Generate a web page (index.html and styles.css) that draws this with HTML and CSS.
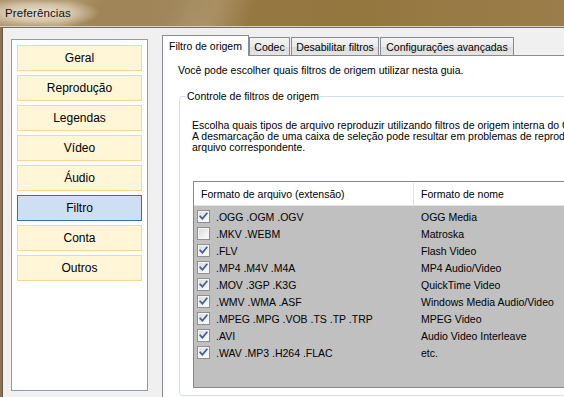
FILE: index.html
```html
<!DOCTYPE html>
<html lang="pt-BR">
<head>
<meta charset="utf-8">
<title>Preferências</title>
<link rel="stylesheet" href="styles.css">
</head>
<body>
<svg class="defs" width="0" height="0" aria-hidden="true">
  <defs>
    <linearGradient id="cbfill" x1="0" y1="0" x2="1" y2="1">
      <stop offset="0" stop-color="#dcdcdc"/>
      <stop offset="1" stop-color="#fbfbfb"/>
    </linearGradient>
    <symbol id="cb-on" viewBox="0 0 13 13">
      <rect x="0.5" y="0.5" width="12" height="12" fill="#f6f6f6" stroke="#8e8f8f"/>
      <rect x="2" y="2" width="9" height="9" fill="url(#cbfill)"/>
      <path d="M3.2 6.4 L5.4 8.8 L9.8 3.4" fill="none" stroke="#3b5a9a" stroke-width="1.7" stroke-linecap="square"/>
    </symbol>
    <symbol id="cb-off" viewBox="0 0 13 13">
      <rect x="0.5" y="0.5" width="12" height="12" fill="#f6f6f6" stroke="#8e8f8f"/>
      <rect x="2" y="2" width="9" height="9" fill="url(#cbfill)"/>
    </symbol>
  </defs>
</svg>
<div class="window">
  <div class="titlebar"><span class="title">Preferências</span></div>
  <div class="frame">
    <div class="client">
      <nav class="sidebar">
        <div class="navbtn">Geral</div>
        <div class="navbtn">Reprodução</div>
        <div class="navbtn">Legendas</div>
        <div class="navbtn">Vídeo</div>
        <div class="navbtn">Áudio</div>
        <div class="navbtn active">Filtro</div>
        <div class="navbtn">Conta</div>
        <div class="navbtn">Outros</div>
      </nav>
      <div class="tabs">
        <div class="tabstrip">
          <div class="tab selected t1">Filtro de origem</div>
          <div class="tab t2">Codec</div>
          <div class="tab t3">Desabilitar filtros</div>
          <div class="tab t4">Configurações avançadas</div>
        </div>
        <div class="page">
          <p class="intro">Você pode escolher quais filtros de origem utilizar nesta guia.</p>
          <fieldset class="group">
            <legend>Controle de filtros de origem</legend>
            <p class="desc">Escolha quais tipos de arquivo reproduzir utilizando filtros de origem interna do GOM Player.<br>A desmarcação de uma caixa de seleção pode resultar em problemas de reprodução do tipo de<br>arquivo correspondente.</p>
            <div class="listview">
              <div class="lv-head">
                <div class="c1">Formato de arquivo (extensão)</div>
                <div class="c2">Formato de nome</div>
              </div>
              <div class="lv-body">
                <div class="lv-row"><div class="c1"><svg class="cb"><use href="#cb-on"/></svg><span>.OGG .OGM .OGV</span></div><div class="c2">OGG Media</div></div>
                <div class="lv-row"><div class="c1"><svg class="cb"><use href="#cb-off"/></svg><span>.MKV .WEBM</span></div><div class="c2">Matroska</div></div>
                <div class="lv-row"><div class="c1"><svg class="cb"><use href="#cb-on"/></svg><span>.FLV</span></div><div class="c2">Flash Video</div></div>
                <div class="lv-row"><div class="c1"><svg class="cb"><use href="#cb-on"/></svg><span>.MP4 .M4V .M4A</span></div><div class="c2">MP4 Audio/Video</div></div>
                <div class="lv-row"><div class="c1"><svg class="cb"><use href="#cb-on"/></svg><span>.MOV .3GP .K3G</span></div><div class="c2">QuickTime Video</div></div>
                <div class="lv-row"><div class="c1"><svg class="cb"><use href="#cb-on"/></svg><span>.WMV .WMA .ASF</span></div><div class="c2">Windows Media Audio/Video</div></div>
                <div class="lv-row"><div class="c1"><svg class="cb"><use href="#cb-on"/></svg><span>.MPEG .MPG .VOB .TS .TP .TRP</span></div><div class="c2">MPEG Video</div></div>
                <div class="lv-row"><div class="c1"><svg class="cb"><use href="#cb-on"/></svg><span>.AVI</span></div><div class="c2">Audio Video Interleave</div></div>
                <div class="lv-row"><div class="c1"><svg class="cb"><use href="#cb-on"/></svg><span>.WAV .MP3 .H264 .FLAC</span></div><div class="c2">etc.</div></div>
              </div>
            </div>
          </fieldset>
        </div>
      </div>
    </div>
  </div>
</div>
</body>
</html>
```
FILE: styles.css
```css
html, body {
  margin: 0;
  padding: 0;
  width: 564px;
  height: 397px;
  overflow: hidden;
}
body {
  font-family: "Liberation Sans", Arial, sans-serif;
  font-size: 10.5px;
  color: #000;
  background: #f0f0f0;
}
.defs {
  position: absolute;
  width: 0;
  height: 0;
}
.window {
  width: 564px;
  height: 397px;
  display: flex;
  flex-direction: column;
}
.titlebar {
  height: 26px;
  flex: none;
  border-bottom: 1px solid #dcd2bb;
  display: flex;
  align-items: center;
  padding-left: 5px;
  background:
    radial-gradient(ellipse 62px 15px at 38px 13px, rgba(236, 228, 212, 0.95) 0%, rgba(226, 214, 190, 0.75) 55%, rgba(200, 180, 140, 0) 100%),
    linear-gradient(115deg, rgba(255,255,255,0) 0%, rgba(255,255,255,0) 8%, rgba(255,240,210,0.18) 12%, rgba(255,255,255,0) 18%, rgba(255,255,255,0) 30%, rgba(255,240,210,0.14) 38%, rgba(255,255,255,0) 45%, rgba(255,255,255,0) 100%),
    linear-gradient(90deg, #b09873 0%, #9f8457 14%, #a0865a 34%, #957742 44%, #94773f 64%, #977a45 82%, #9a7d4a 100%);
}
.title {
  font-size: 11.5px;
  letter-spacing: 0.1px;
  color: #111;
}
.frame {
  flex: 1;
  display: flex;
  padding-left: 2px;
  background: #8f7247;
}
.client {
  flex: 1;
  display: flex;
  align-items: flex-start;
  background: #f0f0f0;
  border-top: 1px solid #6f6f6f;
  border-left: 1px solid #5e5a52;
  padding: 7px 0 0 8px;
}
.sidebar {
  flex: none;
  box-sizing: border-box;
  width: 137px;
  height: 352px;
  margin-top: 4px;
  border: 1px solid #8a9db3;
  background: #fff;
  padding: 5px;
  display: flex;
  flex-direction: column;
  gap: 4px;
}
.navbtn {
  box-sizing: border-box;
  height: 26px;
  border: 1px solid #fdd58e;
  background: #fff5d7;
  font-size: 12px;
  line-height: 24px;
  text-align: center;
  color: #000;
}
.navbtn.active {
  background: #cedff4;
  border-color: #3b6cbc;
}
.tabs {
  flex: none;
  margin-left: 14px;
  display: flex;
  flex-direction: column;
}
.tabstrip {
  height: 20px;
  display: flex;
  align-items: flex-end;
  position: relative;
  z-index: 1;
}
.tab {
  box-sizing: border-box;
  height: 18px;
  border: 1px solid #898c95;
  border-bottom: none;
  background: linear-gradient(#f3f3f3, #ebebeb 50%, #dddddd 51%, #e4e4e4);
  text-align: center;
  line-height: 18px;
  white-space: nowrap;
}
.tab.selected {
  height: 21px;
  margin-bottom: -1px;
  background: #fff;
  line-height: 20px;
}
.t1 { width: 87px; }
.t2 { width: 41px; }
.t3 { width: 88px; margin-left: 1px; }
.t4 { width: 134px; margin-left: 1px; }
.page {
  box-sizing: border-box;
  width: 490px;
  height: 360px;
  border: 1px solid #898c95;
  background: #fff;
  padding: 8px 0 0 15px;
}
.intro {
  margin: 0;
  line-height: 13px;
  white-space: nowrap;
}
.group {
  margin: 13px 0 0 1px;
  padding: 17px 0 7px 6px;
  border: 1px solid #d5dfe5;
  border-radius: 3px;
  min-width: 0;
}
.group legend {
  padding: 0 1px;
  line-height: 13px;
  white-space: nowrap;
}
.desc {
  margin: 0 0 0 6px;
  line-height: 11px;
  white-space: nowrap;
}
.listview {
  margin: 28px 0 0 7px;
  box-sizing: border-box;
  width: 420px;
  height: 207px;
  border: 1px solid #828790;
  background: #c0c0c0;
}
.lv-head {
  display: flex;
  height: 22px;
  background: #fff;
  border-bottom: 1px solid #e3e4e6;
  line-height: 22px;
  padding-top: 1px;
  box-sizing: content-box;
}
.lv-head .c1 {
  box-sizing: border-box;
  width: 220px;
  padding-left: 7px;
  border-right: 1px solid #e3e4e6;
  white-space: nowrap;
}
.lv-head .c2 {
  padding-left: 7px;
  white-space: nowrap;
}
.lv-body {
  padding-top: 2px;
}
.lv-row {
  display: flex;
  height: 17px;
  align-items: center;
}
.lv-row .c1 {
  box-sizing: border-box;
  width: 220px;
  padding-left: 3px;
  display: flex;
  align-items: center;
  gap: 6px;
  white-space: nowrap;
}
.lv-row .c2 {
  padding-left: 7px;
  white-space: nowrap;
}
.cb {
  width: 13px;
  height: 13px;
  flex: none;
}
```
